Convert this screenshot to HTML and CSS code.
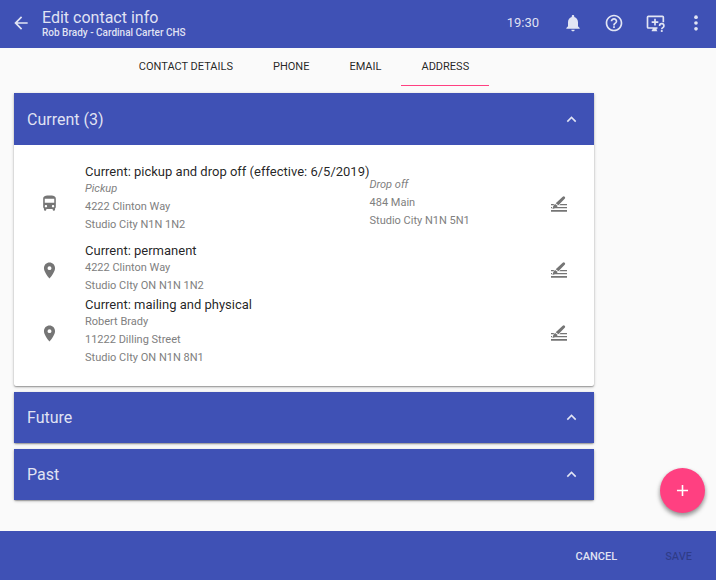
FILE: index.html
```html
<!DOCTYPE html>
<html lang="en">
<head>
<meta charset="utf-8">
<meta name="viewport" content="width=device-width, initial-scale=1">
<title>Edit contact info</title>
<link rel="stylesheet" href="styles.css">
</head>
<body>
<svg class="sprite" aria-hidden="true">
  <symbol id="chevron" viewBox="0 0 24 24"><path d="M12 8l-6 6 1.41 1.41L12 10.83l4.59 4.58L18 14z"/></symbol>
  <symbol id="pin" viewBox="0 0 24 24"><path d="M12 2C8.13 2 5 5.13 5 9c0 5.25 7 13 7 13s7-7.75 7-13c0-3.87-3.13-7-7-7zm0 9.5a2.5 2.5 0 0 1 0-5 2.5 2.5 0 0 1 0 5z"/></symbol>
  <symbol id="bus" viewBox="0 0 24 24"><path d="M4 16c0 .88.39 1.67 1 2.22V20c0 .55.45 1 1 1h1c.55 0 1-.45 1-1v-1h8v1c0 .55.45 1 1 1h1c.55 0 1-.45 1-1v-1.78c.61-.55 1-1.34 1-2.22V6c0-3.5-3.58-4-8-4s-8 .5-8 4v10zm3.5 1c-.83 0-1.500-.67-1.500-1.500S6.670 14 7.500 14s1.500.67 1.500 1.500S8.330 17 7.500 17zm9 0c-.83 0-1.500-.67-1.500-1.500s.67-1.500 1.500-1.500 1.500.67 1.500 1.500-.67 1.500-1.500 1.500zm1.500-6H6V6h12v5z"/></symbol>
  <symbol id="edit" viewBox="0 0 16 16"><path d="M0 14h16v1.800H0zM5.500 11H16v1.300H4zM9.500 8H16v1.300H8.200zM0 8h3.400l-1.200 1.300H0zM0 11h1.200l-.3 1.300H0zM11.700.8q1-.9 2 0 .9 1 0 1.900L7.400 9.200 4.700 7.200zM4.100 7.900l2.700 2-1.900 2-3.500 1.100 1-3.300z"/></symbol>
</svg>

<header class="toolbar">
  <button class="icon-button" type="button" aria-label="Back">
    <svg class="icon" viewBox="0 0 24 24"><path d="M20 11H7.830l5.590-5.590L12 4l-8 8 8 8 1.410-1.410L7.830 13H20v-2z"/></svg>
  </button>
  <div class="heading">
    <h1 class="title">Edit contact info</h1>
    <p class="subtitle">Rob Brady - Cardinal Carter CHS</p>
  </div>
  <time class="clock">19:30</time>
  <div class="actions">
    <button class="icon-button" type="button" aria-label="Notifications">
      <svg class="icon" viewBox="0 0 24 24"><path d="M12 22c1.100 0 2-.9 2-2h-4c0 1.100.89 2 2 2zm6-6v-5c0-3.070-1.640-5.640-4.500-6.320V4c0-.83-.67-1.500-1.500-1.500s-1.500.67-1.500 1.500v.68C7.630 5.360 6 7.920 6 11v5l-2 2v1h16v-1l-2-2z"/></svg>
    </button>
    <button class="icon-button" type="button" aria-label="Help">
      <svg class="icon" viewBox="0 0 24 24"><path d="M11 18h2v-2h-2v2zm1-16C6.480 2 2 6.480 2 12s4.480 10 10 10 10-4.480 10-10S17.520 2 12 2zm0 18c-4.410 0-8-3.590-8-8s3.590-8 8-8 8 3.590 8 8-3.590 8-8 8zm0-14c-2.210 0-4 1.790-4 4h2c0-1.100.9-2 2-2s2 .9 2 2c0 2-3 1.750-3 5h2c0-2.250 3-2.500 3-5 0-2.210-1.790-4-4-4z"/></svg>
    </button>
    <button class="icon-button" type="button" aria-label="Remote support">
      <svg class="icon" viewBox="0 0 24 24"><path d="M4 3h17a2 2 0 0 1 2 2v6h-2V5H4v12h11v2h-1v1.500l1 1.500H8v-1l1.500-2H4a2 2 0 0 1-2-2V5a2 2 0 0 1 2-2zM11 7h2v3h3v2h-3v3h-2v-3H8v-2h3z"/><path class="stroke" d="M17.500 15.500c0-3.600 5.200-3.600 5.200 0 0 2-2.600 2-2.600 4"/><path d="M19 20.500h2.200v2.200H19z"/></svg>
    </button>
    <button class="icon-button" type="button" aria-label="More options">
      <svg class="icon" viewBox="0 0 24 24"><circle cx="12" cy="5" r="2.200"/><circle cx="12" cy="12" r="2.200"/><circle cx="12" cy="19" r="2.200"/></svg>
    </button>
  </div>
</header>

<main class="content">
  <nav class="tabs">
    <a class="tab" href="#details">CONTACT DETAILS</a>
    <a class="tab" href="#phone">PHONE</a>
    <a class="tab" href="#email">EMAIL</a>
    <a class="tab tab-active" href="#address" aria-current="page">ADDRESS</a>
  </nav>

  <div class="panels">
    <section class="panel">
      <h2><button class="panel-header panel-header-open" type="button" aria-expanded="true">Current (3)<svg class="chevron"><use href="#chevron"/></svg></button></h2>
      <ul class="panel-body">
        <li class="address address-bus">
          <svg class="kind"><use href="#bus"/></svg>
          <div class="lines">
            <h3 class="name">Current: pickup and drop off (effective: 6/5/2019)</h3>
            <p class="leg">Pickup</p>
            <p>4222 Clinton Way</p>
            <p>Studio City N1N 1N2</p>
          </div>
          <div class="drop-off">
            <p class="leg">Drop off</p>
            <p>484 Main</p>
            <p>Studio City N1N 5N1</p>
          </div>
          <button class="edit" type="button" aria-label="Edit pickup and drop off address"><svg class="edit-icon"><use href="#edit"/></svg></button>
        </li>
        <li class="address">
          <svg class="kind"><use href="#pin"/></svg>
          <div class="lines">
            <h3 class="name">Current: permanent</h3>
            <p>4222 Clinton Way</p>
            <p>Studio CIty ON N1N 1N2</p>
          </div>
          <button class="edit" type="button" aria-label="Edit permanent address"><svg class="edit-icon"><use href="#edit"/></svg></button>
        </li>
        <li class="address">
          <svg class="kind"><use href="#pin"/></svg>
          <div class="lines">
            <h3 class="name">Current: mailing and physical</h3>
            <p>Robert Brady</p>
            <p>11222 Dilling Street</p>
            <p>Studio CIty ON N1N 8N1</p>
          </div>
          <button class="edit" type="button" aria-label="Edit mailing and physical address"><svg class="edit-icon"><use href="#edit"/></svg></button>
        </li>
      </ul>
    </section>
    <section class="panel">
      <h2><button class="panel-header" type="button">Future<svg class="chevron"><use href="#chevron"/></svg></button></h2>
    </section>
    <section class="panel">
      <h2><button class="panel-header" type="button">Past<svg class="chevron"><use href="#chevron"/></svg></button></h2>
    </section>
  </div>
</main>

<button class="fab" type="button" aria-label="Add address"><svg class="plus" viewBox="0 0 24 24"><path d="M19 13h-6v6h-2v-6H5v-2h6V5h2v6h6v2z"/></svg></button>

<footer class="footer">
  <button class="text-button" type="button">CANCEL</button>
  <button class="text-button" type="button" disabled>SAVE</button>
</footer>
</body>
</html>
```
FILE: styles.css
```css
* {
  box-sizing: border-box;
}

body {
  margin: 0;
  min-height: 100vh;
  display: flex;
  flex-direction: column;
  background: #fafafa;
  color: rgba(0, 0, 0, 0.87);
  font-family: Roboto, "Liberation Sans", sans-serif;
}

h1, h2, h3, p, ul {
  margin: 0;
  padding: 0;
  font-size: inherit;
  font-weight: 400;
  list-style: none;
}

button {
  padding: 0;
  border: 0;
  background: none;
  color: inherit;
  font: inherit;
}

svg {
  display: block;
  fill: currentColor;
}

.sprite {
  position: absolute;
  width: 0;
  height: 0;
}

.icon {
  width: 20px;
  height: 20px;
}

.stroke {
  fill: none;
  stroke: currentColor;
  stroke-width: 2;
}

.toolbar {
  display: flex;
  align-items: center;
  height: 48px;
  padding: 0 10px 0 11px;
  background: #3f51b5;
  color: rgba(255, 255, 255, 0.85);
}

.toolbar .icon-button {
  padding-bottom: 2px;
}

.heading {
  flex: 1;
  margin-left: 11px;
}

.title {
  font-size: 16px;
  line-height: 18px;
}

.subtitle {
  font-size: 10px;
  font-weight: 500;
  line-height: 12px;
}

.clock {
  margin-right: 24px;
  font-size: 13px;
  line-height: 16px;
  padding-bottom: 2px;
}

.actions {
  display: flex;
  gap: 21px;
}

.content {
  flex: 1;
  padding: 0 122px 31px 14px;
}

.tabs {
  display: flex;
  justify-content: center;
  margin-bottom: 7px;
}

.tab {
  padding: 1px 20px 0;
  border-bottom: 1px solid transparent;
  color: inherit;
  font-size: 11px;
  line-height: 36px;
  text-decoration: none;
}

.tab-active {
  border-bottom-color: #ff4081;
}

.panels {
  display: grid;
  gap: 6px;
}

.panel {
  background: #fff;
  border-radius: 0 0 2px 2px;
  box-shadow: 0 1px 3px rgba(0, 0, 0, 0.3), 0 1px 1px rgba(0, 0, 0, 0.2);
}

.panel-header {
  display: flex;
  align-items: center;
  justify-content: space-between;
  width: 100%;
  height: 51px;
  padding: 0 13px;
  background: #3f51b5;
  color: rgba(255, 255, 255, 0.85);
  font-size: 16px;
}

.panel-header-open {
  height: 52px;
}

.chevron {
  width: 19px;
  height: 19px;
}

.panel-body {
  padding: 19px 27px 17px 26px;
}

.address {
  display: flex;
  align-items: center;
}

.kind {
  width: 19px;
  height: 19px;
  margin-right: 26px;
  color: #757575;
}

.lines,
.drop-off {
  padding-bottom: 2px;
  color: #808080;
  font-size: 11px;
  line-height: 18px;
}

.address-bus .lines {
  padding-bottom: 9px;
}

.name {
  color: rgba(0, 0, 0, 0.87);
  font-size: 13px;
  line-height: 16px;
}

.leg {
  font-style: italic;
}

.edit {
  margin-left: auto;
  color: #757575;
}

.edit-icon {
  width: 16px;
  height: 16px;
}

.fab {
  position: fixed;
  right: 11px;
  bottom: 67px;
  display: grid;
  place-items: center;
  width: 45px;
  height: 45px;
  border-radius: 50%;
  background: #ff4081;
  color: #fff;
  box-shadow: 0 3px 5px rgba(0, 0, 0, 0.3), 0 2px 4px rgba(0, 0, 0, 0.2);
}

.plus {
  width: 19px;
  height: 19px;
}

.footer {
  display: flex;
  align-items: center;
  justify-content: flex-end;
  gap: 48px;
  height: 49px;
  padding: 1px 24px 0;
  background: #3f51b5;
}

.text-button {
  color: rgba(255, 255, 255, 0.85);
  font-size: 11px;
  font-weight: 500;
}

.text-button:disabled {
  color: rgba(0, 0, 0, 0.26);
}
```
